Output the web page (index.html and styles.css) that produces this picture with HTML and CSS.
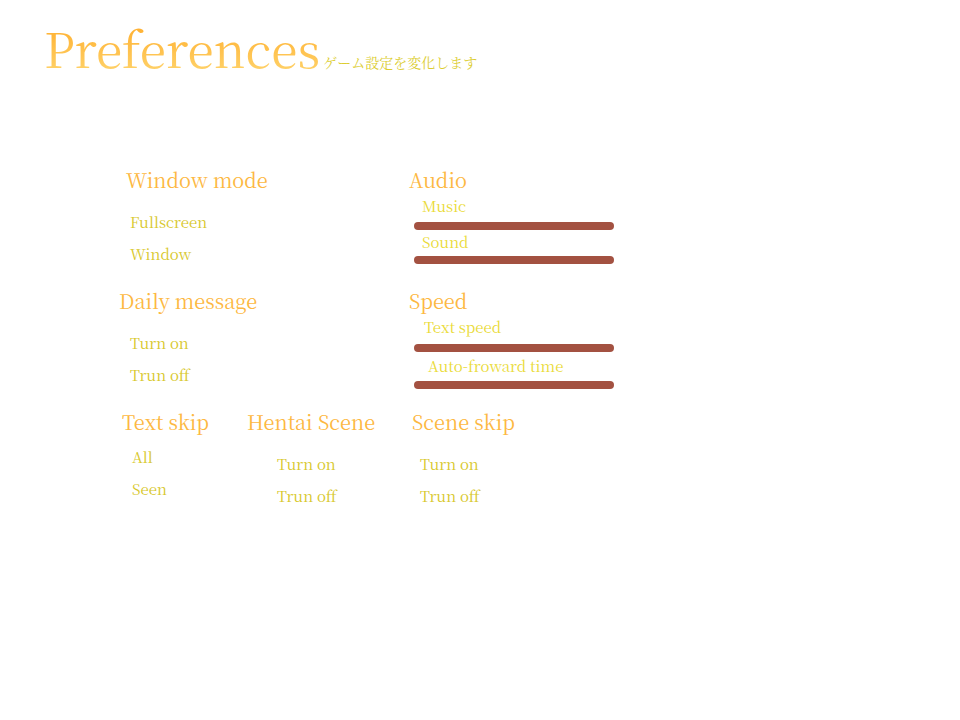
FILE: index.html
```html
<!DOCTYPE html>
<html lang="ja">
<head>
<meta charset="utf-8">
<title>Preferences</title>
<link rel="stylesheet" href="styles.css">
</head>
<body>
<header class="page-head">
  <h1>Preferences</h1>
  <p>ゲーム設定を変化します</p>
</header>
<main class="prefs">
  <section class="group wide">
    <h2 class="inset-l">Window mode</h2>
    <div class="choices">
      <button type="button">Fullscreen</button>
      <button type="button">Window</button>
    </div>
  </section>
  <section class="group">
    <h2>Audio</h2>
    <div class="sliders">
      <label for="music">Music</label>
      <input type="range" id="music">
      <label for="sound">Sound</label>
      <input type="range" id="sound">
    </div>
  </section>
  <section class="group wide">
    <h2>Daily message</h2>
    <div class="choices">
      <button type="button">Turn on</button>
      <button type="button">Trun off</button>
    </div>
  </section>
  <section class="group">
    <h2>Speed</h2>
    <div class="sliders loose">
      <label for="text-speed">Text speed</label>
      <input type="range" id="text-speed">
      <label for="auto-time" class="indented">Auto-froward time</label>
      <input type="range" id="auto-time">
    </div>
  </section>
  <section class="group">
    <h2 class="inset-s">Text skip</h2>
    <div class="choices tight">
      <button type="button">All</button>
      <button type="button">Seen</button>
    </div>
  </section>
  <section class="group">
    <h2>Hentai Scene</h2>
    <div class="choices deep">
      <button type="button">Turn on</button>
      <button type="button">Trun off</button>
    </div>
  </section>
  <section class="group">
    <h2 class="inset-s">Scene skip</h2>
    <div class="choices">
      <button type="button">Turn on</button>
      <button type="button">Trun off</button>
    </div>
  </section>
</main>
</body>
</html>
```
FILE: styles.css
```css
* { box-sizing: border-box; }
body {
  margin: 0;
  background: #fff;
  font-family: "Noto Serif CJK SC", "Noto Serif CJK JP", "Noto Sans CJK JP", serif;
}
h1, h2, p { margin: 0; font-weight: 400; }
.page-head { display: flex; align-items: baseline; gap: 3px; padding: 12px 44px 0; }
h1 {
  font-size: 48px;
  line-height: 72px;
  color: transparent;
  background: linear-gradient(#ffb030 20%, #ffd066 80%);
  background-clip: text;
}
.page-head p { font-size: 14px; color: #dccd30; }
.prefs {
  display: grid;
  grid-template-columns: 128px 162px 1fr;
  grid-template-rows: 121px 121px auto;
  padding: 82px 44px 0 119px;
}
.wide { grid-column: span 2; }
h2 { font-size: 20px; line-height: 28px; color: #fdb842; }
.inset-l { padding-left: 7px; }
.inset-s { padding-left: 3px; }
.choices { display: flex; flex-direction: column; align-items: flex-start; gap: 8px; padding: 16px 0 0 11px; }
.tight { padding: 9px 0 0 13px; }
.deep { padding-left: 30px; }
button { padding: 0; border: 0; background: none; font: inherit; font-size: 15px; line-height: 24px; color: #d8c82c; cursor: pointer; }
.sliders { display: flex; flex-direction: column; align-items: flex-start; padding-left: 5px; }
label { padding-left: 8px; font-size: 15px; line-height: 24px; color: #eadb38; }
input { appearance: none; width: 200px; height: 8px; margin: 4px 0 0; border-radius: 4px; background: #a35141; }
input ~ label { line-height: 24px; }
input ~ input { margin-top: 2px; }
.loose label { padding-left: 10px; }
.loose input { margin-top: 5px; }
.loose .indented { padding-left: 14px; line-height: 28px; }
.loose input ~ input { margin-top: 1px; }
input::-webkit-slider-thumb { appearance: none; width: 0; height: 0; }
```
